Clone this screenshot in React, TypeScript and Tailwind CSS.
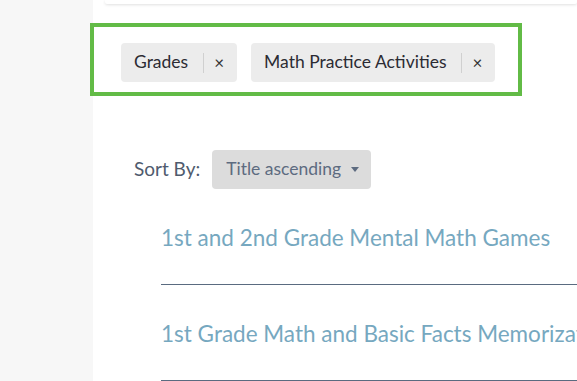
import React from 'react';

const chips = ['Grades', 'Math Practice Activities'];
const results = ['1st and 2nd Grade Mental Math Games', '1st Grade Math and Basic Facts Memorization'];

function Chip({ label }: { label: string }) {
  return (
    <div className="flex h-[39px] items-center rounded-[4px] bg-[#ececec] pl-[13px] text-[17.5px] text-[#2b2b33]">
      <span className="whitespace-nowrap">{label}</span>
      <span className="ml-[15px] h-[20px] w-px bg-[#d0d0d0]" />
      <button type="button" className="pl-[10px] pr-[13px] text-[17px] leading-none text-[#333]">×</button>
    </div>
  );
}

export default function App() {
  return (
    <div className="flex h-[381px] w-[577px] overflow-hidden bg-white font-['Lato',sans-serif]">
      <aside className="w-[93px] shrink-0 bg-[#f7f7f7]" />
      <main className="flex min-w-0 flex-1 flex-col">
        <div className="ml-[12px] h-[4px] shrink-0 rounded-b-[2px] bg-white shadow-[0_1px_3px_rgba(0,0,0,0.12)]" />
        <div className="-ml-[3px] mt-[19px] flex h-[73px] w-[432px] shrink-0 items-start gap-[14px] border-4 border-[#62bb46] pl-[27px] pt-[16px]">
          {chips.map((c) => (
            <Chip key={c} label={c} />
          ))}
        </div>
        <div className="ml-[41px] mt-[54px] flex items-center gap-[12px]">
          <span className="text-[19px] text-[#4f5b6e]">Sort By:</span>
          <button type="button" className="flex h-[39px] w-[159px] items-center rounded-[4px] bg-[#dcdcdc] pl-[14px] text-[17.5px] text-[#5d6b80]">
            Title ascending
            <span className="ml-[10px] h-0 w-0 border-x-[4px] border-t-[5px] border-x-transparent border-t-[#5d6b80]" />
          </button>
        </div>
        <ul className="ml-[68px]">
          {results.map((r) => (
            <li key={r} className="border-b-[1.5px] border-[#5a6b80]">
              <a className="block whitespace-nowrap pb-[33px] pt-[36px] text-[22.5px] leading-[26px] text-[#76a8c0]">{r}</a>
            </li>
          ))}
        </ul>
      </main>
    </div>
  );
}
